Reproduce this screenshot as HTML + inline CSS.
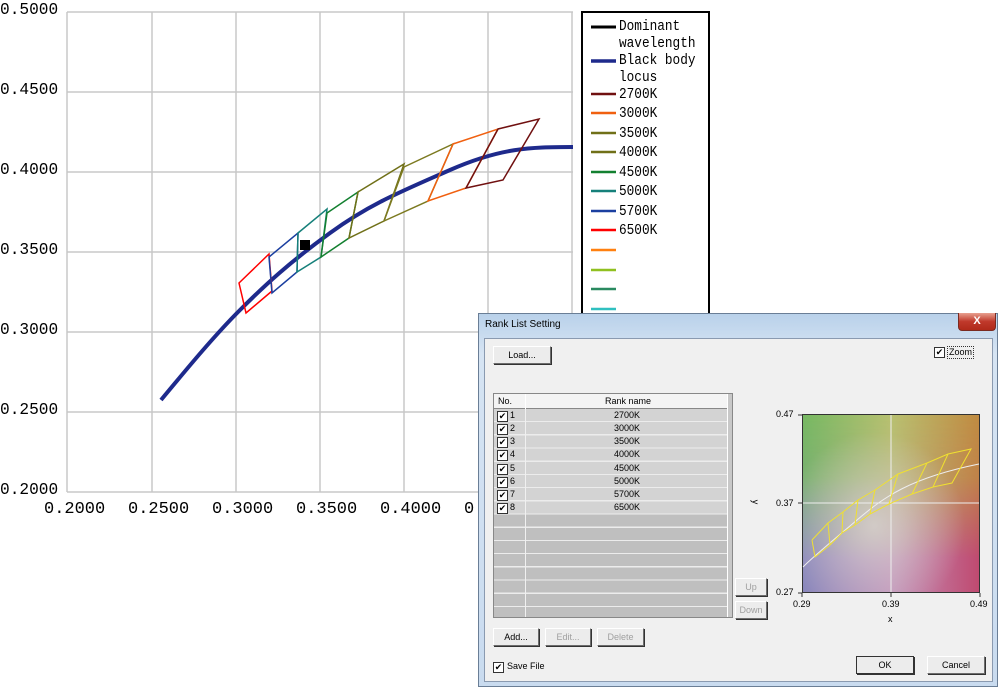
<!DOCTYPE html>
<html><head><style>
body{margin:0;width:1000px;height:687px;position:relative;background:#fff;overflow:hidden;font-family:"Liberation Sans",sans-serif}
.yl{position:absolute;left:0;font:17px "Liberation Mono",monospace;color:#000;transform:scaleX(.95);transform-origin:left}
.xl{position:absolute;top:500px;font:17px "Liberation Mono",monospace;color:#000}
.lg{position:absolute;font:15px "Liberation Mono",monospace;color:#000;line-height:17px;transform:scaleX(.85);transform-origin:left}
.a{position:absolute}
.btn{position:absolute;background:#ececec;border:1px solid #fff;border-right-color:#6d6d6d;border-bottom-color:#6d6d6d;box-shadow:1px 1px 0 #333;font-size:9px;text-align:center;line-height:16px;color:#000}
.dis{color:#a0a0a0}
.cb{position:absolute;width:9px;height:9px;border:1px solid #333;background:#fff;font-size:9px;line-height:9px;text-align:center}
.t{position:absolute;font-size:9px;color:#000}
</style></head><body>
<svg class="a" style="left:0;top:0" width="1000" height="687">
<g stroke="#c8c8c8" stroke-width="1.5">
<line x1="67" y1="12" x2="573" y2="12"/><line x1="67" y1="92" x2="573" y2="92"/><line x1="67" y1="172" x2="573" y2="172"/><line x1="67" y1="252" x2="573" y2="252"/><line x1="67" y1="332" x2="573" y2="332"/><line x1="67" y1="412" x2="573" y2="412"/><line x1="67" y1="492" x2="573" y2="492"/>
<line x1="67" y1="12" x2="67" y2="492"/><line x1="152" y1="12" x2="152" y2="492"/><line x1="236" y1="12" x2="236" y2="492"/><line x1="320" y1="12" x2="320" y2="492"/><line x1="404" y1="12" x2="404" y2="492"/><line x1="488" y1="12" x2="488" y2="492"/><line x1="572" y1="12" x2="572" y2="492"/>
</g>
<path d="M161,400 C190,365 215,335 240,310 S290,262 330,233 S400,192 450,170 S530,147 573,147" fill="none" stroke="#1e2a8c" stroke-width="4"/>
<g fill="none" stroke-width="1.5">
<polygon points="239,283 269,254 272,291 246,313" stroke="#f00"/>
<polygon points="269,257 298,233 297,272 272,293" stroke="#1b3fa0"/>
<polygon points="298,233 327,209 321,257 297,272" stroke="#16807a"/>
<polygon points="327,213 358,192 349,238 321,257" stroke="#138030"/>
<polygon points="358,192 404,164 384,221 349,238" stroke="#707018"/>
<polygon points="404,167 453,144 428,201 384,221" stroke="#7c7a20"/>
<polygon points="453,144 498,129 466,188 428,201" stroke="#f06010"/>
<polygon points="498,129 539,119 503,180 466,188" stroke="#701010"/>
</g>
<rect x="300" y="240" width="10" height="10" fill="#000"/>
<rect x="582" y="12" width="127" height="310" fill="#fff" stroke="#000" stroke-width="2"/>
<g stroke-width="2.5">
<line x1="591" y1="27" x2="616" y2="27" stroke="#000" stroke-width="3"/>
<line x1="591" y1="61" x2="616" y2="61" stroke="#1e2a8c" stroke-width="3.5"/>
<line x1="591" y1="94" x2="616" y2="94" stroke="#701010"/>
<line x1="591" y1="113" x2="616" y2="113" stroke="#f06010"/>
<line x1="591" y1="133" x2="616" y2="133" stroke="#707018"/>
<line x1="591" y1="152" x2="616" y2="152" stroke="#707018"/>
<line x1="591" y1="172" x2="616" y2="172" stroke="#138030"/>
<line x1="591" y1="191" x2="616" y2="191" stroke="#16807a"/>
<line x1="591" y1="211" x2="616" y2="211" stroke="#1b3fa0"/>
<line x1="591" y1="230" x2="616" y2="230" stroke="#f00"/>
<line x1="591" y1="250" x2="616" y2="250" stroke="#ff8010"/>
<line x1="591" y1="270" x2="616" y2="270" stroke="#90c020"/>
<line x1="591" y1="289" x2="616" y2="289" stroke="#2a8a60"/>
<line x1="591" y1="309" x2="616" y2="309" stroke="#30c0c0"/>
</g>
</svg>
<div class="yl" style="top:1px">0.5000</div><div class="yl" style="top:81px">0.4500</div><div class="yl" style="top:161px">0.4000</div><div class="yl" style="top:241px">0.3500</div><div class="yl" style="top:321px">0.3000</div><div class="yl" style="top:401px">0.2500</div><div class="yl" style="top:481px">0.2000</div>
<div class="xl" style="left:44px">0.2000</div><div class="xl" style="left:128px">0.2500</div><div class="xl" style="left:212px">0.3000</div><div class="xl" style="left:296px">0.3500</div><div class="xl" style="left:380px">0.4000</div><div class="xl" style="left:464px">0.4500</div>
<div class="lg" style="left:619px;top:18px">Dominant<br>wavelength</div>
<div class="lg" style="left:619px;top:52px">Black body<br>locus</div>
<div class="lg" style="left:619px;top:86px">2700K</div><div class="lg" style="left:619px;top:105px">3000K</div><div class="lg" style="left:619px;top:125px">3500K</div><div class="lg" style="left:619px;top:144px">4000K</div><div class="lg" style="left:619px;top:164px">4500K</div><div class="lg" style="left:619px;top:183px">5000K</div><div class="lg" style="left:619px;top:203px">5700K</div><div class="lg" style="left:619px;top:222px">6500K</div>

<!-- dialog -->
<div class="a" style="left:478px;top:313px;width:520px;height:374px;background:linear-gradient(#b9d1ea,#d6e4f3 40px,#c9dbef);border:1px solid #6a7e96;box-sizing:border-box"></div>
<div class="t" style="left:485px;top:319px;font-size:10px">Rank List Setting</div>
<div class="a" style="left:958px;top:313px;width:36px;height:17px;background:linear-gradient(#e8a090,#c0392b 50%,#b02a1a);border:1px solid #7a2a20;border-top:none;border-radius:0 0 4px 4px;color:#fff;font-weight:bold;font-size:11px;text-align:center;line-height:16px">X</div>
<div class="a" style="left:484px;top:338px;width:509px;height:344px;background:#f0f0f0;border:1px solid #8a9ab0;box-sizing:border-box"></div>
<div class="btn" style="left:493px;top:346px;width:56px;height:16px">Load...</div>
<div class="cb" style="left:934px;top:347px">✔</div><div class="t" style="left:947px;top:346px;border:1px dotted #333;padding:0 1px;line-height:11px">Zoom</div>
<div class="a" style="left:493px;top:393px;width:240px;height:225px;background:#c8c8c8;border:1px solid #888;box-sizing:border-box"></div>
<div class="a" style="left:494px;top:394px;width:233px;height:14px;background:#f4f4f4;border-bottom:1px solid #888"></div>
<div class="a" style="left:525px;top:394px;width:1px;height:223px;background:#fff"></div>
<div class="a" style="left:727px;top:394px;width:1px;height:223px;background:#fff"></div>
<div class="t" style="left:498px;top:396px">No.</div><div class="t" style="left:605px;top:396px">Rank name</div>
<div class="a" style="left:494px;top:409px;width:233px;height:208px;background:repeating-linear-gradient(#bfbfbf 0,#bfbfbf 12px,#ececec 12px,#ececec 13.2px)"></div>
<div class="a" style="left:494px;top:409px;width:233px;height:105px;background:repeating-linear-gradient(#d3d3d3 0,#d3d3d3 12px,#ececec 12px,#ececec 13.2px)"></div>
<div class="a" style="left:525px;top:409px;width:1px;height:208px;background:#f0f0f0"></div>

<div class="cb" style="left:497px;top:411px">✔</div><div class="t" style="left:510px;top:410px">1</div><div class="t" style="left:614px;top:410px">2700K</div>
<div class="cb" style="left:497px;top:424px">✔</div><div class="t" style="left:510px;top:423px">2</div><div class="t" style="left:614px;top:423px">3000K</div>
<div class="cb" style="left:497px;top:437px">✔</div><div class="t" style="left:510px;top:436px">3</div><div class="t" style="left:614px;top:436px">3500K</div>
<div class="cb" style="left:497px;top:450px">✔</div><div class="t" style="left:510px;top:449px">4</div><div class="t" style="left:614px;top:449px">4000K</div>
<div class="cb" style="left:497px;top:464px">✔</div><div class="t" style="left:510px;top:463px">5</div><div class="t" style="left:614px;top:463px">4500K</div>
<div class="cb" style="left:497px;top:477px">✔</div><div class="t" style="left:510px;top:476px">6</div><div class="t" style="left:614px;top:476px">5000K</div>
<div class="cb" style="left:497px;top:490px">✔</div><div class="t" style="left:510px;top:489px">7</div><div class="t" style="left:614px;top:489px">5700K</div>
<div class="cb" style="left:497px;top:503px">✔</div><div class="t" style="left:510px;top:502px">8</div><div class="t" style="left:614px;top:502px">6500K</div>

<div class="btn dis" style="left:735px;top:578px;width:30px;height:16px">Up</div>
<div class="btn dis" style="left:735px;top:601px;width:30px;height:16px">Down</div>
<div class="btn" style="left:493px;top:628px;width:44px;height:16px">Add...</div>
<div class="btn dis" style="left:545px;top:628px;width:44px;height:16px">Edit...</div>
<div class="btn dis" style="left:597px;top:628px;width:45px;height:16px">Delete</div>
<div class="cb" style="left:493px;top:662px">✔</div><div class="t" style="left:507px;top:661px">Save File</div>
<div class="btn" style="left:856px;top:656px;width:56px;height:16px;border:1px solid #333">OK</div>
<div class="btn" style="left:927px;top:656px;width:56px;height:16px">Cancel</div>

<div class="a" style="left:802px;top:414px;width:178px;height:179px;overflow:hidden;border:1px solid #333;box-sizing:border-box;background:linear-gradient(90deg,#8a88bc,#c294bc 50%,#c04a70)">
<div class="a" style="left:0;top:0;width:178px;height:179px;background:linear-gradient(90deg,#76b862,#b8c070 50%,#c08a40);-webkit-mask-image:linear-gradient(#000 0%,rgba(0,0,0,.85) 35%,rgba(0,0,0,0) 80%);mask-image:linear-gradient(#000 0%,rgba(0,0,0,.85) 35%,rgba(0,0,0,0) 80%)"></div>
<div class="a" style="left:0;top:0;width:178px;height:179px;background:radial-gradient(ellipse at 40% 62%,rgba(215,210,205,.85),rgba(215,210,205,.4) 30%,rgba(215,210,205,0) 60%)"></div>
</div>
<svg class="a" style="left:0;top:0" width="1000" height="687">
<line x1="891" y1="415" x2="891" y2="592" stroke="#eee" stroke-width="1"/>
<line x1="803" y1="503" x2="979" y2="503" stroke="#eee" stroke-width="1"/>
<path d="M803,567 C815,555 830,543 857,520 S910,478 979,464" fill="none" stroke="#eee" stroke-width="1"/>
<g fill="none" stroke="#f0e030" stroke-width="1">
<polyline points="812,540 828,523 843,512 858,500 875,490 898,474 927,463 948,454 971,449 952,483 933,487 912,494 889,504 870,514 855,525 842,533 830,545 815,557 812,540"/>
<line x1="828" y1="523" x2="830" y2="545"/><line x1="843" y1="512" x2="842" y2="533"/><line x1="858" y1="500" x2="855" y2="525"/><line x1="875" y1="490" x2="870" y2="514"/><line x1="898" y1="474" x2="889" y2="504"/><line x1="927" y1="463" x2="912" y2="494"/><line x1="948" y1="454" x2="933" y2="487"/>
</g>
<g stroke="#333"><line x1="798" y1="415" x2="802" y2="415"/><line x1="798" y1="503" x2="802" y2="503"/><line x1="798" y1="593" x2="802" y2="593"/><line x1="802" y1="593" x2="802" y2="597"/><line x1="891" y1="593" x2="891" y2="597"/><line x1="980" y1="593" x2="980" y2="597"/></g>
</svg>
<div class="t" style="left:776px;top:409px">0.47</div><div class="t" style="left:776px;top:498px">0.37</div><div class="t" style="left:776px;top:587px">0.27</div>
<div class="t" style="left:793px;top:599px">0.29</div><div class="t" style="left:882px;top:599px">0.39</div><div class="t" style="left:970px;top:599px">0.49</div>
<div class="t" style="left:888px;top:614px">x</div><div class="t" style="left:753px;top:497px;transform:rotate(90deg)">y</div>
</body></html>
